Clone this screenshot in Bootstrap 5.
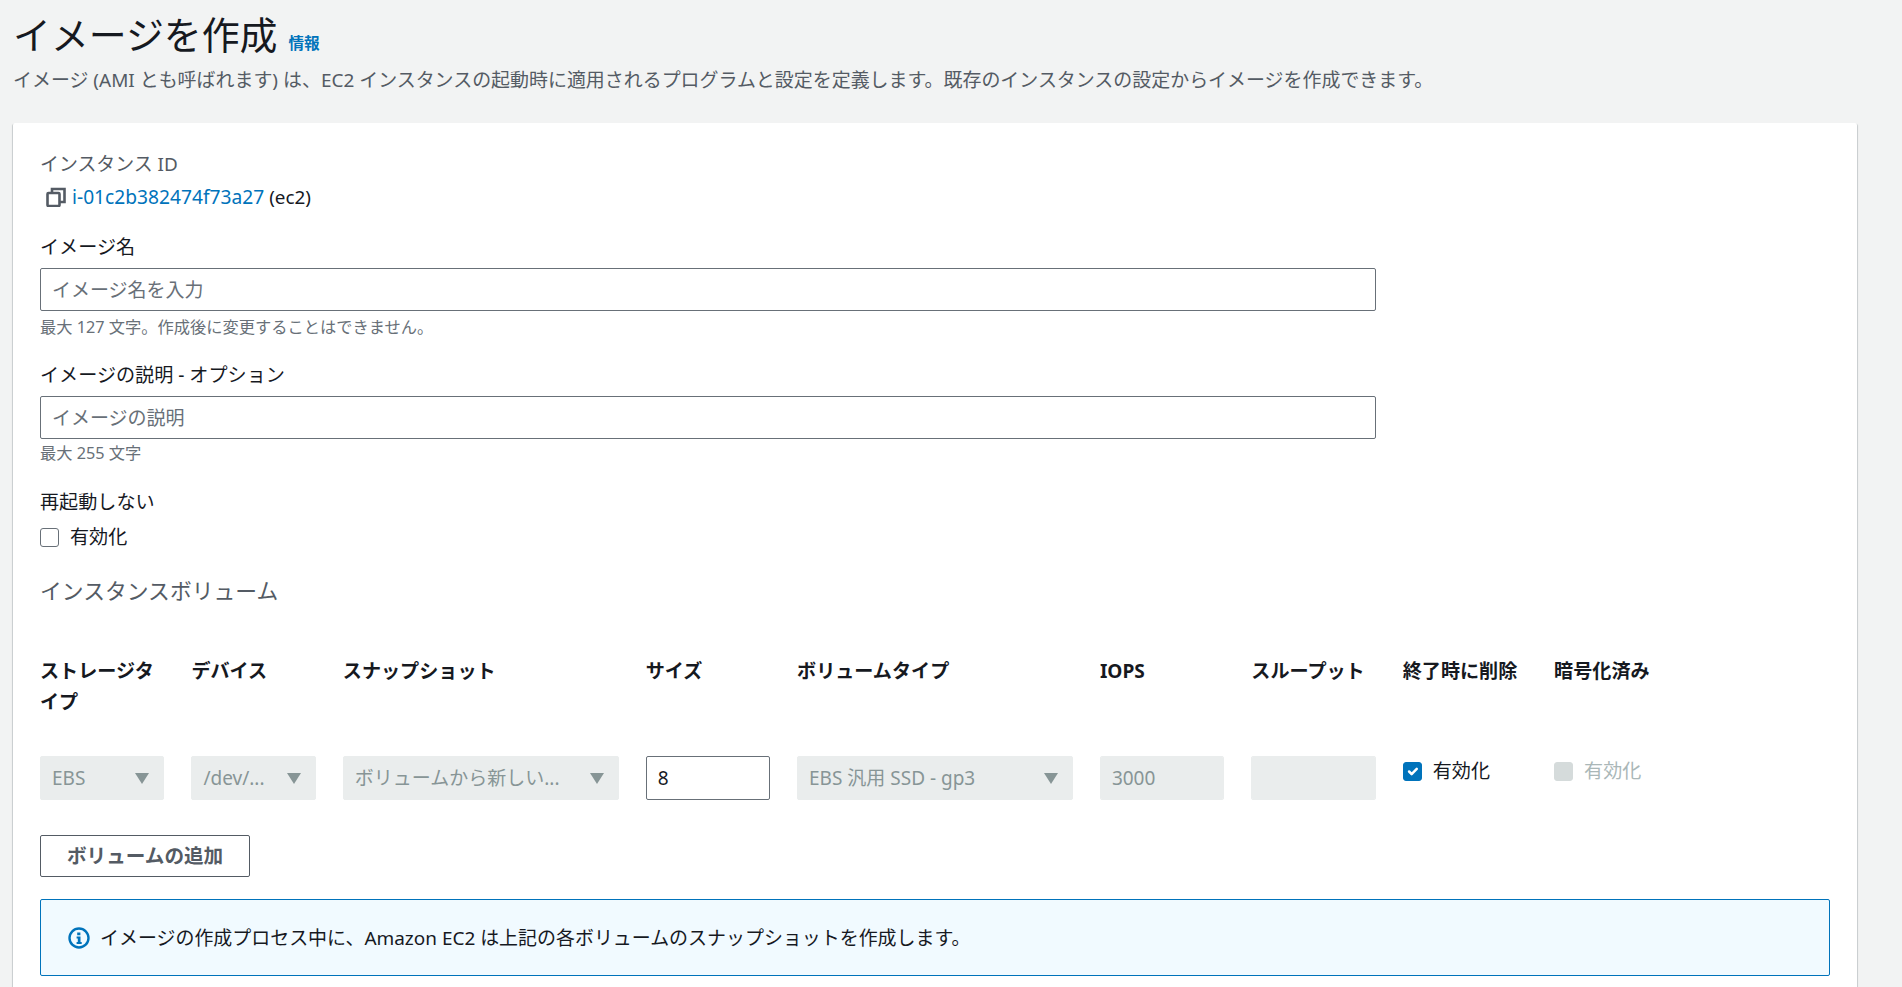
<!DOCTYPE html>
<html lang="ja">
<head>
<meta charset="utf-8">
<title>イメージを作成</title>
<link href="https://cdn.jsdelivr.net/npm/bootstrap@5.3.0/dist/css/bootstrap.min.css" rel="stylesheet">
<style>
body{background:#f2f3f3;color:#16191f;font-family:"Noto Sans","Noto Sans CJK JP",sans-serif;font-size:19.1px;line-height:30px;}
.page-wrap{height:987px;overflow:hidden;padding:14px 45px 0 13px;}
.page-title{font-size:37.9px;font-weight:400;line-height:40px;margin:0;}
.info-link{font-size:15.6px;font-weight:700;color:#0073bb;text-decoration:none;margin-left:11px;line-height:30px;margin-bottom:-4px;}
.page-desc{color:#545b64;margin:11px 0 0;font-size:18.97px;line-height:30px;}
.form-panel{background:#fff;border-radius:2px;box-shadow:0 1px 1px 0 rgba(0,28,36,.3),1px 1px 1px 0 rgba(0,28,36,.15),-1px 1px 1px 0 rgba(0,28,36,.15);margin-top:28px;padding:26px 27px 40px;height:900px;}
.grid-gut{--bs-gutter-x:27px;--bs-gutter-y:0;}
.soft-label{color:#545b64;line-height:30px;font-size:18.9px;}
.id-row{line-height:30px;margin-top:3px;padding-left:6px;gap:6px;}
.id-link{color:#0073bb;text-decoration:none;font-size:19.2px;}
.id-note{font-size:18.9px;}
.field-label{display:block;margin:0 0 6px;line-height:30px;}
.aws-input.form-control{height:43px;border:1px solid #687078;border-radius:2px;font-size:19px;padding:0 11px;color:#16191f;line-height:30px;}
.aws-input.form-control::placeholder{color:#687078;opacity:1;}
.hint-text{color:#687078;font-size:16.25px;line-height:20px;margin-top:6px;}
.hint-tight{margin-top:4px;}
.field-box{margin-top:23px;}
.field-restart{margin-top:24px;}
.field-first{margin-top:20px;}
.check-line{display:flex;align-items:center;gap:11px;line-height:30px;}
.aws-check.form-check-input{width:19px;height:19px;margin:0;border:1px solid #687078;border-radius:3px;flex:none;}
.aws-check.form-check-input:checked{background-color:#0073bb;border-color:#0073bb;opacity:1;}
.aws-check.form-check-input:disabled{background-color:#d5dbdb;border-color:#d5dbdb;opacity:1;}
.restart-check{margin-top:5px;}
.vol-heading{font-size:21.8px;font-weight:400;line-height:30px;color:#545b64;margin:24px 0 0;}
.col-head{font-weight:700;line-height:30.5px;}
.head-row{margin-top:50px;}
.cell-row{margin-top:39px;}
.aws-select.form-select,.aws-disabled.form-control{height:44px;background-color:#eaeded;border:1px solid #eaeded;border-radius:2px;color:#879596;font-size:19px;line-height:30px;opacity:1;}
.aws-select.form-select{padding:0 36px 0 11px;background-image:url("data:image/svg+xml,%3Csvg xmlns='http://www.w3.org/2000/svg' viewBox='0 0 16 16'%3E%3Cpath fill='%23879596' d='M1 3h14L8 14z'/%3E%3C/svg%3E");background-size:16px 16px;background-position:right 13px center;}
.aws-disabled.form-control{padding:0 11px;}
.aws-num.form-control{height:44px;}
.off-label{color:#aab7b8;}
.add-btn.btn{height:42px;margin-top:35px;padding:0 26px;border:1px solid #545b64;border-radius:2px;background:#fff;color:#545b64;font-weight:700;font-size:19.6px;line-height:30px;}
.aws-note.alert{display:flex;align-items:center;gap:10px;height:77px;margin:22px 0 0;padding:0 27px;background:#f1faff;border:1px solid #0073bb;border-radius:2px;color:#16191f;font-size:18.95px;line-height:30px;}
</style>
</head>
<body>
<div class="page-wrap">
  <div class="d-flex align-items-end">
    <h1 class="page-title">イメージを作成</h1>
    <a class="info-link" href="#">情報</a>
  </div>
  <p class="page-desc">イメージ (AMI とも呼ばれます) は、EC2 インスタンスの起動時に適用されるプログラムと設定を定義します。既存のインスタンスの設定からイメージを作成できます。</p>

  <div class="form-panel">
    <div class="soft-label">インスタンス ID</div>
    <div class="id-row d-flex align-items-center">
      <svg width="20" height="20" viewBox="0 0 20 20" fill="none" stroke="#545b64" stroke-width="2.6" aria-hidden="true"><rect x="1.5" y="6" width="12" height="13" rx="1"/><path d="M6 5V2h12.5v13H14"/></svg>
      <span><a class="id-link" href="#">i-01c2b382474f73a27</a> <span class="id-note">(ec2)</span></span>
    </div>

    <div class="field-first">
      <label class="field-label" for="imgName">イメージ名</label>
      <div class="row grid-gut">
        <div class="col-9"><input id="imgName" class="form-control aws-input" placeholder="イメージ名を入力"></div>
      </div>
      <div class="hint-text">最大 127 文字。作成後に変更することはできません。</div>
    </div>

    <div class="field-box">
      <label class="field-label" for="imgDesc">イメージの説明 - オプション</label>
      <div class="row grid-gut">
        <div class="col-9"><input id="imgDesc" class="form-control aws-input" placeholder="イメージの説明"></div>
      </div>
      <div class="hint-text hint-tight">最大 255 文字</div>
    </div>

    <div class="field-restart">
      <div>再起動しない</div>
      <label class="check-line restart-check"><input type="checkbox" class="form-check-input aws-check">有効化</label>
    </div>

    <h2 class="vol-heading">インスタンスボリューム</h2>

    <div class="row grid-gut head-row">
      <div class="col-1 col-head">ストレージタイプ</div>
      <div class="col-1 col-head">デバイス</div>
      <div class="col-2 col-head">スナップショット</div>
      <div class="col-1 col-head">サイズ</div>
      <div class="col-2 col-head">ボリュームタイプ</div>
      <div class="col-1 col-head">IOPS</div>
      <div class="col-1 col-head">スループット</div>
      <div class="col-1 col-head">終了時に削除</div>
      <div class="col-1 col-head">暗号化済み</div>
    </div>

    <div class="row grid-gut cell-row">
      <div class="col-1"><select class="form-select aws-select" disabled><option>EBS</option></select></div>
      <div class="col-1"><select class="form-select aws-select" disabled><option>/dev/...</option></select></div>
      <div class="col-2"><select class="form-select aws-select" disabled><option>ボリュームから新しい...</option></select></div>
      <div class="col-1"><input class="form-control aws-input aws-num" value="8"></div>
      <div class="col-2"><select class="form-select aws-select" disabled><option>EBS 汎用 SSD - gp3</option></select></div>
      <div class="col-1"><input class="form-control aws-disabled" value="3000" disabled></div>
      <div class="col-1"><input class="form-control aws-disabled" disabled></div>
      <div class="col-1"><label class="check-line"><input type="checkbox" class="form-check-input aws-check" checked>有効化</label></div>
      <div class="col-1"><label class="check-line off-label"><input type="checkbox" class="form-check-input aws-check" disabled>有効化</label></div>
    </div>

    <button type="button" class="btn add-btn">ボリュームの追加</button>

    <div class="alert aws-note" role="alert">
      <svg width="22" height="22" viewBox="0 0 22 22" aria-hidden="true"><circle cx="11" cy="11" r="9.5" fill="none" stroke="#0073bb" stroke-width="2.4"/><path fill="#0073bb" d="M9.2 5.4h3.2v2.8H9.2zM8.6 9.6h3.9v5.3h1.2v2H8.6v-2h1.2v-3.3H8.6z"/></svg>
      <span>イメージの作成プロセス中に、Amazon EC2 は上記の各ボリュームのスナップショットを作成します。</span>
    </div>
  </div>
</div>
<script src="https://cdn.jsdelivr.net/npm/bootstrap@5.3.0/dist/js/bootstrap.bundle.min.js"></script>
</body>
</html>
